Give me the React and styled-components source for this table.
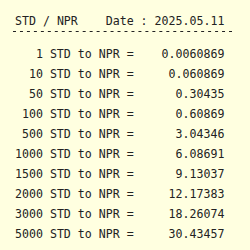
import styled, { createGlobalStyle } from "styled-components";

const GlobalStyle = createGlobalStyle`
  html, body {
    margin: 0;
    padding: 0;
    background: #ffffe0;
  }
`;

const rates = [
  { amount: 1, value: "0.0060869" },
  { amount: 10, value: "0.060869" },
  { amount: 50, value: "0.30435" },
  { amount: 100, value: "0.60869" },
  { amount: 500, value: "3.04346" },
  { amount: 1000, value: "6.08691" },
  { amount: 1500, value: "9.13037" },
  { amount: 2000, value: "12.17383" },
  { amount: 3000, value: "18.26074" },
  { amount: 5000, value: "30.43457" },
];

const App = () => {
  return (
    <Page>
      <GlobalStyle />
      <Header>
        <span>STD / NPR</span>
        <span>Date : 2025.05.11</span>
      </Header>
      <Rule />
      <Table>
        {rates.map((r) => (
          <Row key={r.amount}>
            <Label>{r.amount} STD to NPR</Label>
            <Eq>=</Eq>
            <Value>{r.value}</Value>
          </Row>
        ))}
      </Table>
    </Page>
  );
};

const Page = styled.div`
  width: 250px;
  height: 250px;
  box-sizing: border-box;
  padding: 11px 0 0 15px;
  background: #ffffe0;
  color: #222;
  font-family: "DejaVu Sans Mono", monospace;
  font-size: 11.6px;
  overflow: hidden;
`;

const Header = styled.div`
  display: flex;
  justify-content: space-between;
  width: 30ch;
  line-height: 20px;
  white-space: pre;
`;

/* dashed rule, one dash per character cell */
const Rule = styled.div`
  width: 32ch;
  height: 1px;
  margin-left: -4.5px;
  background-image: linear-gradient(
    to right,
    transparent 1.8px,
    #222 1.8px,
    #222 5.2px,
    transparent 5.2px
  );
  background-size: 1ch 1px;
  background-repeat: repeat-x;
`;

const Table = styled.div`
  display: flex;
  flex-direction: column;
  margin-top: 12.4px;
  width: 30ch;
`;

const Row = styled.div`
  display: flex;
  line-height: 20px;
  white-space: pre;
`;

const Label = styled.span`
  width: 15ch;
  text-align: right;
`;

const Eq = styled.span`
  width: 2ch;
  text-align: right;
`;

const Value = styled.span`
  flex: 1;
  text-align: right;
`;

export default App;
